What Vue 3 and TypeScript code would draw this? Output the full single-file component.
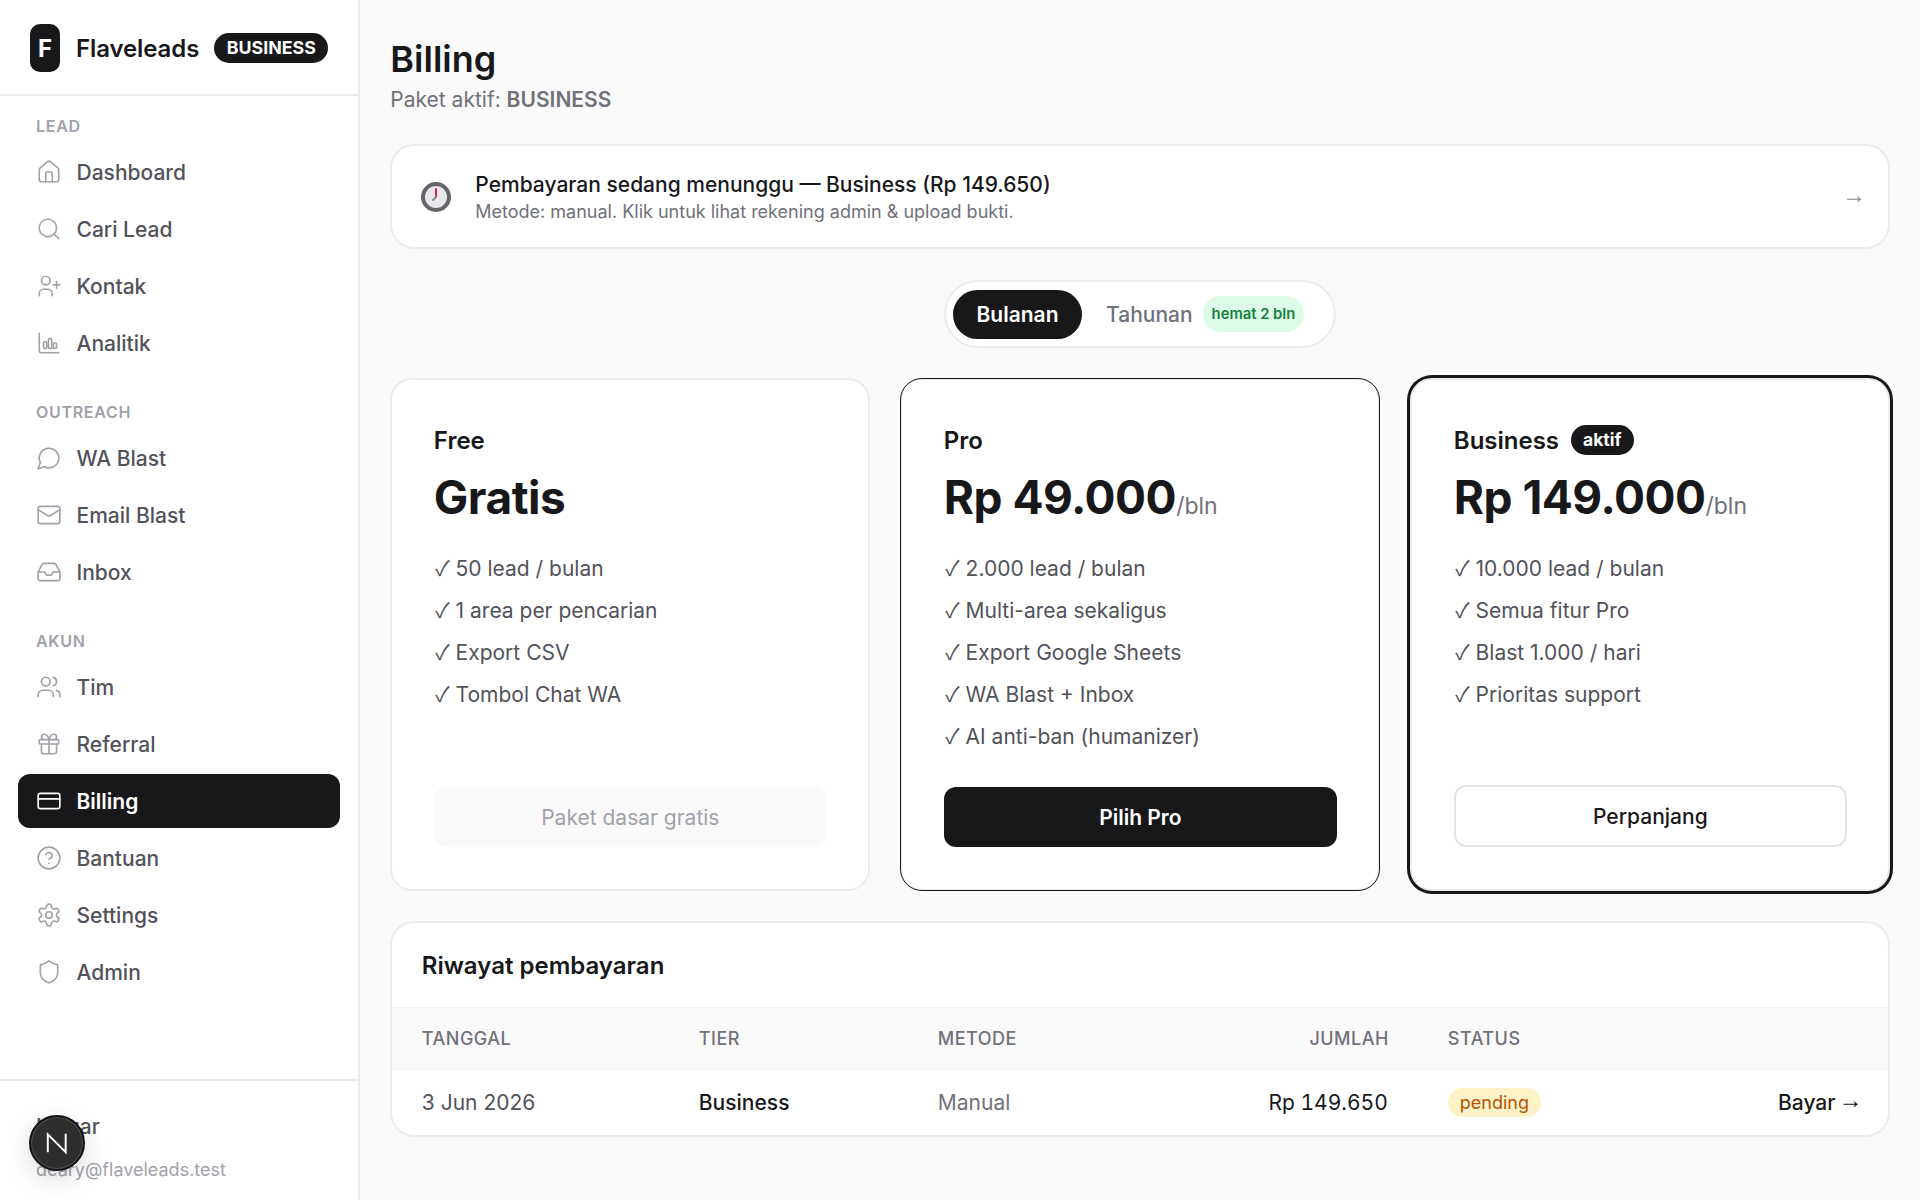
<script setup lang="ts">
interface NavItem {
  label: string
  icon: string
  active?: boolean
}

interface NavGroup {
  title: string
  items: NavItem[]
}

interface Plan {
  name: string
  price: string
  period?: string
  features: string[]
  cta: string
  kind: 'muted' | 'solid' | 'outline'
  current?: boolean
}

const groups: NavGroup[] = [
  {
    title: 'LEAD',
    items: [
      { label: 'Dashboard', icon: 'house' },
      { label: 'Cari Lead', icon: 'search' },
      { label: 'Kontak', icon: 'userPlus' },
      { label: 'Analitik', icon: 'chart' },
    ],
  },
  {
    title: 'OUTREACH',
    items: [
      { label: 'WA Blast', icon: 'chat' },
      { label: 'Email Blast', icon: 'mail' },
      { label: 'Inbox', icon: 'inbox' },
    ],
  },
  {
    title: 'AKUN',
    items: [
      { label: 'Tim', icon: 'users' },
      { label: 'Referral', icon: 'gift' },
      { label: 'Billing', icon: 'card', active: true },
      { label: 'Bantuan', icon: 'help' },
      { label: 'Settings', icon: 'gear' },
      { label: 'Admin', icon: 'shield' },
    ],
  },
]

const plans: Plan[] = [
  {
    name: 'Free',
    price: 'Gratis',
    features: ['50 lead / bulan', '1 area per pencarian', 'Export CSV', 'Tombol Chat WA'],
    cta: 'Paket dasar gratis',
    kind: 'muted',
  },
  {
    name: 'Pro',
    price: 'Rp 49.000',
    period: '/bln',
    features: [
      '2.000 lead / bulan',
      'Multi-area sekaligus',
      'Export Google Sheets',
      'WA Blast + Inbox',
      'AI anti-ban (humanizer)',
    ],
    cta: 'Pilih Pro',
    kind: 'solid',
  },
  {
    name: 'Business',
    price: 'Rp 149.000',
    period: '/bln',
    features: ['10.000 lead / bulan', 'Semua fitur Pro', 'Blast 1.000 / hari', 'Prioritas support'],
    cta: 'Perpanjang',
    kind: 'outline',
    current: true,
  },
]
</script>

<template>
  <div class="app">
    <aside class="sidebar">
      <div class="brand">
        <span class="brand__logo">F</span>
        <span class="brand__name">Flaveleads</span>
        <span class="brand__tier">BUSINESS</span>
      </div>

      <nav class="nav">
        <section v-for="group in groups" :key="group.title" class="nav__group">
          <div class="nav__title">{{ group.title }}</div>
          <a
            v-for="item in group.items"
            :key="item.label"
            class="nav__item"
            :class="{ 'nav__item--active': item.active }"
          >
            <svg class="nav__icon" viewBox="0 0 24 24" fill="none" stroke="currentColor" stroke-width="1.5" stroke-linecap="round" stroke-linejoin="round">
              <template v-if="item.icon === 'house'">
                <path d="M15 21v-8a1 1 0 0 0-1-1h-4a1 1 0 0 0-1 1v8" />
                <path d="M3 10a2 2 0 0 1 .709-1.528l7-5.999a2 2 0 0 1 2.582 0l7 5.999A2 2 0 0 1 21 10v9a2 2 0 0 1-2 2H5a2 2 0 0 1-2-2z" />
              </template>
              <template v-else-if="item.icon === 'search'">
                <circle cx="11" cy="11" r="8" />
                <path d="m21 21-4.3-4.3" />
              </template>
              <template v-else-if="item.icon === 'userPlus'">
                <path d="M3 21v-2a4 4 0 0 1 4-4h4a4 4 0 0 1 4 4v2" />
                <circle cx="9" cy="7" r="4" />
                <path d="M19 8v6M16 11h6" />
              </template>
              <template v-else-if="item.icon === 'chart'">
                <path d="M3 3v16a2 2 0 0 0 2 2h16" />
                <rect x="7" y="11" width="3" height="6" rx="1" />
                <rect x="11.5" y="8" width="3" height="9" rx="1" />
                <rect x="16" y="12" width="3" height="5" rx="1" />
              </template>
              <template v-else-if="item.icon === 'chat'">
                <path d="M7.9 20A9 9 0 1 0 4 16.1L2 22Z" />
              </template>
              <template v-else-if="item.icon === 'mail'">
                <rect x="2" y="4" width="20" height="16" rx="2" />
                <path d="m22 7-8.97 5.7a1.94 1.94 0 0 1-2.06 0L2 7" />
              </template>
              <template v-else-if="item.icon === 'inbox'">
                <path d="M22 12h-6l-2 3h-4l-2-3H2" />
                <path d="M5.45 5.11 2 12v6a2 2 0 0 0 2 2h16a2 2 0 0 0 2-2v-6l-3.45-6.89A2 2 0 0 0 16.76 4H7.24a2 2 0 0 0-1.79 1.11z" />
              </template>
              <template v-else-if="item.icon === 'users'">
                <path d="M16 21v-2a4 4 0 0 0-4-4H6a4 4 0 0 0-4 4v2" />
                <circle cx="9" cy="7" r="4" />
                <path d="M22 21v-2a4 4 0 0 0-3-3.87" />
                <path d="M16 3.13a4 4 0 0 1 0 7.75" />
              </template>
              <template v-else-if="item.icon === 'gift'">
                <rect x="3" y="8" width="18" height="4" rx="1" />
                <path d="M12 8v13" />
                <path d="M19 12v7a2 2 0 0 1-2 2H7a2 2 0 0 1-2-2v-7" />
                <path d="M7.5 8a2.5 2.5 0 0 1 0-5A4.8 8 0 0 1 12 8a4.8 8 0 0 1 4.5-5 2.5 2.5 0 0 1 0 5" />
              </template>
              <template v-else-if="item.icon === 'card'">
                <rect x="2" y="5" width="20" height="14" rx="2" />
                <path d="M2 10h20" />
              </template>
              <template v-else-if="item.icon === 'help'">
                <circle cx="12" cy="12" r="10" />
                <path d="M9.09 9a3 3 0 0 1 5.83 1c0 2-3 3-3 3" />
                <path d="M12 17h.01" />
              </template>
              <template v-else-if="item.icon === 'gear'">
                <path d="M12.22 2h-.44a2 2 0 0 0-2 2v.18a2 2 0 0 1-1 1.73l-.43.25a2 2 0 0 1-2 0l-.15-.08a2 2 0 0 0-2.73.73l-.22.38a2 2 0 0 0 .73 2.73l.15.1a2 2 0 0 1 1 1.72v.51a2 2 0 0 1-1 1.74l-.15.09a2 2 0 0 0-.73 2.73l.22.38a2 2 0 0 0 2.73.73l.15-.08a2 2 0 0 1 2 0l.43.25a2 2 0 0 1 1 1.73V20a2 2 0 0 0 2 2h.44a2 2 0 0 0 2-2v-.18a2 2 0 0 1 1-1.73l.43-.25a2 2 0 0 1 2 0l.15.08a2 2 0 0 0 2.73-.73l.22-.39a2 2 0 0 0-.73-2.73l-.15-.08a2 2 0 0 1-1-1.74v-.5a2 2 0 0 1 1-1.74l.15-.09a2 2 0 0 0 .73-2.73l-.22-.38a2 2 0 0 0-2.73-.73l-.15.08a2 2 0 0 1-2 0l-.43-.25a2 2 0 0 1-1-1.73V4a2 2 0 0 0-2-2z" />
                <circle cx="12" cy="12" r="3" />
              </template>
              <template v-else-if="item.icon === 'shield'">
                <path d="M20 13c0 5-3.5 7.5-7.66 8.95a1 1 0 0 1-.67-.01C7.5 20.5 4 18 4 13V6a1 1 0 0 1 1-1c2 0 4.5-1.2 6.24-2.72a1.17 1.17 0 0 1 1.52 0C14.51 3.81 17 5 19 5a1 1 0 0 1 1 1z" />
              </template>
            </svg>
            <span>{{ item.label }}</span>
          </a>
        </section>
      </nav>

      <div class="account">
        <div class="account__logout">Keluar</div>
        <div class="account__email">deary@flaveleads.test</div>
      </div>

      <div class="dev-badge">
        <svg viewBox="0 0 24 24" width="26" height="26" fill="none" stroke="#fff" stroke-width="1.8">
          <path d="M3.5 20.5V4L20 20.5V3.5" />
        </svg>
      </div>
    </aside>

    <main class="main">
      <h1 class="page-title">Billing</h1>
      <p class="page-sub">Paket aktif: <strong>BUSINESS</strong></p>

      <div class="notice">
        <svg class="notice__clock" viewBox="0 0 30 30">
          <circle cx="15" cy="15" r="13" fill="#e7e6e8" stroke="#66646a" stroke-width="4" />
          <path d="M15 15V7" stroke="#d6204e" stroke-width="2" stroke-linecap="round" />
          <path d="M15 15l-3 3" stroke="#8e8c92" stroke-width="2" stroke-linecap="round" />
        </svg>
        <div class="notice__body">
          <div class="notice__title">Pembayaran sedang menunggu — Business (Rp 149.650)</div>
          <div class="notice__desc">Metode: manual. Klik untuk lihat rekening admin &amp; upload bukti.</div>
        </div>
        <span class="notice__arrow arrow">→</span>
      </div>

      <div class="toggle-row">
        <div class="toggle">
          <span class="toggle__on">Bulanan</span>
          <span class="toggle__off">Tahunan</span>
          <span class="toggle__save">hemat 2 bln</span>
        </div>
      </div>

      <div class="plans">
        <div
          v-for="plan in plans"
          :key="plan.name"
          class="plan"
          :class="{ 'plan--pro': plan.kind === 'solid', 'plan--current': plan.current }"
        >
          <div class="plan__name">
            {{ plan.name }}
            <span v-if="plan.current" class="plan__tag">aktif</span>
          </div>
          <div class="plan__price">
            {{ plan.price }}<span v-if="plan.period" class="plan__period">{{ plan.period }}</span>
          </div>
          <ul class="plan__list">
            <li v-for="f in plan.features" :key="f"><span class="check">✓</span> {{ f }}</li>
          </ul>
          <div class="plan__cta" :class="`plan__cta--${plan.kind}`">{{ plan.cta }}</div>
        </div>
      </div>

      <div class="history">
        <h2 class="history__title">Riwayat pembayaran</h2>
        <table class="history__table">
          <colgroup>
            <col style="width: 277px" />
            <col style="width: 239px" />
            <col style="width: 250px" />
            <col style="width: 260px" />
            <col style="width: 240px" />
            <col />
          </colgroup>
          <thead>
            <tr>
              <th>TANGGAL</th>
              <th>TIER</th>
              <th>METODE</th>
              <th class="right">JUMLAH</th>
              <th>STATUS</th>
              <th></th>
            </tr>
          </thead>
          <tbody>
            <tr>
              <td class="date">3 Jun 2026</td>
              <td class="ink">Business</td>
              <td class="gray">Manual</td>
              <td class="right amount">Rp 149.650</td>
              <td><span class="pill">pending</span></td>
              <td class="right ink pay">Bayar <span class="arrow arrow--tight">→</span></td>
            </tr>
          </tbody>
        </table>
      </div>
    </main>
  </div>
</template>

<style>
body {
  background: #fafafa;
}
</style>

<style scoped>
.app {
  display: flex;
  min-height: 100vh;
  background: #fafafa;
  color: #18181b;
  font-family: Inter, 'Liberation Sans', sans-serif;
}

.arrow {
  font-family: 'Liberation Sans', sans-serif;
  font-size: 24px;
  line-height: 1;
  position: relative;
  top: -2px;
}

.arrow--tight {
  margin-left: -2.5px;
}

.check {
  margin-left: 1.5px;
  font-family: 'Noto Sans CJK JP', sans-serif;
  line-height: 1;
}

.sidebar {
  position: relative;
  flex: 0 0 360px;
  height: 1200px;
  box-sizing: border-box;
  display: flex;
  flex-direction: column;
  background: #fff;
  border-right: 2px solid #ececee;
}

.brand {
  height: 96px;
  box-sizing: border-box;
  display: flex;
  align-items: center;
  padding: 2px 30px 0;
  border-bottom: 2px solid #ececee;
}

.brand__logo {
  flex: 0 0 30px;
  height: 48px;
  display: flex;
  align-items: center;
  justify-content: center;
  border-radius: 10px;
  background: #18181b;
  color: #fff;
  font-size: 24px;
  font-weight: 700;
}

.brand__name {
  margin-left: 16px;
  font-size: 24px;
  font-weight: 600;
  letter-spacing: -0.1px;
}

.brand__tier {
  margin-left: 15px;
  padding: 0 12.5px;
  height: 30px;
  line-height: 30px;
  border-radius: 15px;
  background: #18181b;
  color: #fff;
  font-size: 17.8px;
  font-weight: 700;
}

.nav {
  flex: 1;
  padding: 20px 18px 0 18px;
}

.nav__group + .nav__group {
  margin-top: 32px;
}

.nav__title {
  height: 20px;
  line-height: 20px;
  margin-bottom: 9px;
  padding-left: 18px;
  color: #a1a1aa;
  font-size: 16px;
  font-weight: 600;
  letter-spacing: 0.7px;
}

.nav__item {
  height: 54px;
  display: flex;
  align-items: center;
  gap: 14.5px;
  padding-left: 18px;
  margin-bottom: 3px;
  border-radius: 12px;
  color: #52525b;
  font-size: 21px;
  font-weight: 500;
}

.nav__item:last-child {
  margin-bottom: 0;
}

.nav__item--active {
  background: #18181b;
  color: #fff;
  font-weight: 600;
}

.nav__icon {
  flex: 0 0 26px;
  width: 26px;
  height: 26px;
  color: #a1a1aa;
}

.nav__item--active .nav__icon {
  color: #fff;
}

.account {
  height: 121px;
  box-sizing: border-box;
  border-top: 2px solid #ececee;
  padding: 33px 36px 0;
}

.account__logout {
  color: #52525b;
  font-size: 21px;
  font-weight: 500;
  line-height: 26px;
}

.account__email {
  margin-top: 18px;
  color: #a1a1aa;
  font-size: 18px;
  line-height: 24px;
}

.dev-badge {
  position: absolute;
  left: 29px;
  top: 1115px;
  width: 56px;
  height: 56px;
  box-sizing: border-box;
  display: flex;
  align-items: center;
  justify-content: center;
  border-radius: 50%;
  background: #2e2e2e;
  border: 2px solid #111;
  box-shadow: 0 0 0 1px #555 inset, 0 8px 24px rgba(0, 0, 0, 0.14);
}

.main {
  flex: 1;
  min-width: 0;
  padding: 37px 30px 0;
}

.page-title {
  margin: 0;
  font-size: 36px;
  line-height: 44px;
  font-weight: 600;
}

.page-sub {
  margin: 5px 0 0;
  color: #71717a;
  font-size: 21px;
  line-height: 28px;
}

.page-sub strong {
  font-weight: 600;
}

.notice {
  margin-top: 30px;
  height: 105px;
  box-sizing: border-box;
  display: flex;
  align-items: center;
  padding: 0 22px 0 29px;
  background: #fff;
  border: 2px solid #ececee;
  border-radius: 24px;
}

.notice__clock {
  width: 30px;
  height: 30px;
  flex: 0 0 30px;
  margin-right: 24px;
  margin-top: 0;
}

.notice__body {
  flex: 1;
}

.notice__title {
  font-size: 21px;
  line-height: 28px;
  font-weight: 500;
  padding-top: 1px;
}

.notice__desc {
  margin-top: 1px;
  color: #71717a;
  font-size: 18px;
  line-height: 24px;
}

.notice__arrow {
  color: #8e8e96;
}

.toggle-row {
  margin-top: 31px;
  display: flex;
  justify-content: center;
}

.toggle {
  height: 68px;
  box-sizing: border-box;
  display: flex;
  align-items: center;
  padding: 0 30px 0 7px;
  background: #fff;
  border: 2px solid #ececee;
  border-radius: 34px;
}

.toggle__on {
  height: 49px;
  line-height: 49px;
  padding: 0 23.5px;
  border-radius: 25px;
  background: #18181b;
  color: #fff;
  font-size: 21px;
  font-weight: 600;
}

.toggle__off {
  margin-left: 24px;
  color: #71717a;
  font-size: 21px;
  font-weight: 500;
}

.toggle__save {
  margin-left: 10px;
  height: 36px;
  line-height: 36px;
  padding: 0 9px;
  border-radius: 18px;
  background: #dcfce7;
  color: #15803d;
  font-size: 14.8px;
  font-weight: 600;
}

.plans {
  margin-top: 30px;
  display: grid;
  grid-template-columns: repeat(3, 480px);
  gap: 30px;
}

.plan {
  height: 513px;
  box-sizing: border-box;
  display: flex;
  flex-direction: column;
  padding: 45px 41.5px 42px;
  background: #fff;
  border: 2px solid #ececee;
  border-radius: 22px;
}

.plan--pro {
  outline: 1px solid #18181b;
  outline-offset: -1px;
}

.plan--current {
  box-shadow: 0 0 0 3px #18181b;
}

.plan__name {
  display: flex;
  align-items: center;
  gap: 12px;
  height: 30px;
  font-size: 24px;
  font-weight: 600;
}

.plan__tag {
  height: 30px;
  line-height: 30px;
  padding: 0 12px;
  border-radius: 15px;
  background: #18181b;
  color: #fff;
  font-size: 17.5px;
  font-weight: 700;
}

.plan__price {
  margin-top: 12px;
  height: 60px;
  font-size: 46px;
  line-height: 60px;
  font-weight: 700;
  letter-spacing: -0.5px;
}

.plan__period {
  color: #71717a;
  font-size: 23px;
  line-height: 1;
  font-weight: 400;
  letter-spacing: 0;
}

.plan__list {
  list-style: none;
  margin: 21px 0 0;
  padding: 0;
  color: #52525b;
  font-size: 21px;
}

.plan__list li {
  height: 42px;
  line-height: 42px;
}

.plan__cta {
  margin-top: auto;
  height: 60px;
  box-sizing: border-box;
  display: flex;
  align-items: center;
  justify-content: center;
  border-radius: 12px;
  font-size: 21px;
  font-weight: 500;
}

.plan__cta--muted {
  background: #fafafa;
  color: #a1a1aa;
  font-weight: 400;
}

.plan__cta--solid {
  background: #18181b;
  color: #fff;
  font-weight: 600;
}

.plan__cta--outline {
  height: 62px;
  background: #fff;
  border: 2px solid #e4e4e7;
}

.history {
  margin-top: 30px;
  background: #fff;
  border: 2px solid #ececee;
  border-radius: 24px;
  overflow: hidden;
}

.history__title {
  margin: 0;
  height: 84px;
  line-height: 86px;
  padding-left: 29.5px;
  font-size: 24px;
  font-weight: 600;
}

.history__table {
  width: 100%;
  table-layout: fixed;
  border-collapse: collapse;
}

.history__table th {
  height: 61px;
  padding: 0 29.5px;
  background: #fafafa;
  border-top: 1px solid #f2f2f3;
  border-bottom: 1px solid #f2f2f3;
  text-align: left;
  color: #71717a;
  font-size: 18px;
  font-weight: 500;
  letter-spacing: 0.5px;
}

.history__table td {
  height: 65px;
  padding: 0 29.5px;
  font-size: 21px;
}

.history__table th.right,
.history__table td.right {
  text-align: right;
}

.history__table td.amount {
  padding-right: 30.5px;
  color: #18181b;
  font-variant-numeric: tabular-nums;
}

.history__table td.pay {
  padding-right: 25.5px;
}

.date {
  color: #52525b;
}

.ink {
  color: #18181b;
  font-weight: 500;
}

.gray {
  color: #71717a;
}

.pill {
  display: inline-block;
  height: 29px;
  line-height: 29px;
  padding: 0 12px;
  border-radius: 15px;
  background: #fef3c7;
  color: #b45309;
  font-size: 18px;
}
</style>
